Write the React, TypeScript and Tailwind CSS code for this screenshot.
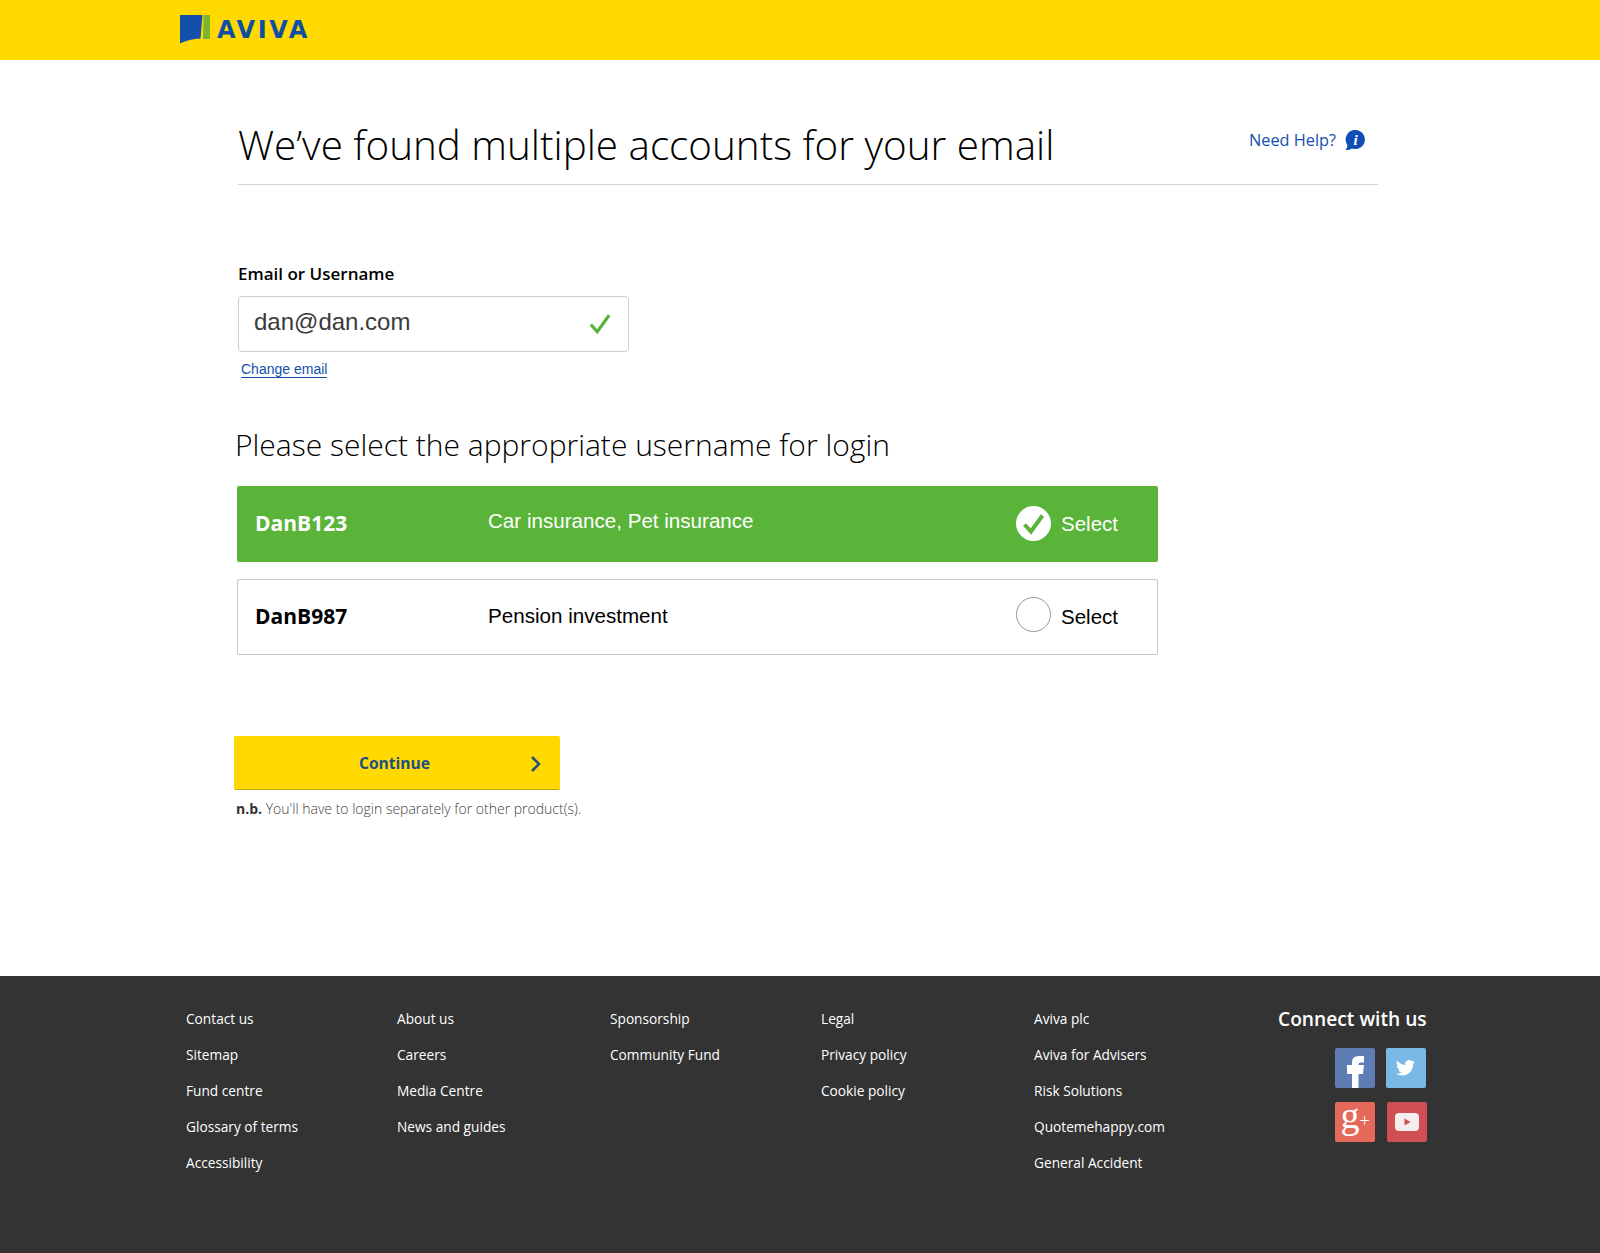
const SANS = 'font-["Open_Sans",sans-serif]';

const FOOTER_COLUMNS = [
  { width: 'w-[211px]', links: ['Contact us', 'Sitemap', 'Fund centre', 'Glossary of terms', 'Accessibility'] },
  { width: 'w-[213px]', links: ['About us', 'Careers', 'Media Centre', 'News and guides'] },
  { width: 'w-[211px]', links: ['Sponsorship', 'Community Fund'] },
  { width: 'w-[213px]', links: ['Legal', 'Privacy policy', 'Cookie policy'] },
  { width: 'w-[244px]', links: ['Aviva plc', 'Aviva for Advisers', 'Risk Solutions', 'Quotemehappy.com', 'General Accident'] },
];

function Logo() {
  return (
    <div className="flex items-center">
      <svg width="30" height="30" viewBox="0 0 30 30" className="mt-[-1px]">
        <path d="M0 0H22.5L20.5 23.5Q9 24 0 28.5Z" fill="#1250ac" />
        <path d="M23.5 0H30V24H23Z" fill="#7cb52e" />
      </svg>
      <span className="ml-[7px] font-['DejaVu_Sans',sans-serif] text-[24px] leading-none font-bold tracking-[2.6px] text-[#0f4fa3]">
        AVIVA
      </span>
    </div>
  );
}

function HelpIcon() {
  return (
    <svg width="22" height="22" viewBox="0 0 22 22">
      <path d="M11.5 1a9.5 9.5 0 1 1-3.4 18.4Q5 21.4 1.5 21Q3.3 19.200 3.4 16A9.500 9.500 0 0 1 11.500 1Z" fill="#0d4fb5" />
      <text x="11.500" y="16" textAnchor="middle" fontFamily="Liberation Serif, serif" fontWeight="700" fontStyle="italic" fontSize="15" fill="#fff">
        i
      </text>
    </svg>
  );
}

function AccountRow({ name, products, selected }: { name: string; products: string; selected: boolean }) {
  return (
    <div
      className={
        selected
          ? 'flex h-[76px] w-[921px] items-center rounded-[2px] bg-[#5ab43a] pl-[18px] text-white'
          : 'mt-[17px] flex h-[76px] w-[921px] items-center rounded-[2px] border border-[#c9c9c9] bg-white pl-[17px] text-black'
      }
    >
      <div className={`w-[233px] text-[21px] font-bold ${SANS}`}>{name}</div>
      <div className={`w-[528px] font-['Liberation_Sans',sans-serif] text-[20.6px] ${selected ? 'mb-[5px]' : 'mb-[2px]'}`}>{products}</div>
      {selected ? (
        <svg width="35" height="35" viewBox="0 0 35 35" className="mr-[10px] mb-[2px]">
          <circle cx="17.500" cy="17.500" r="17.500" fill="#fff" />
          <path d="M8.500 18.500L15 25.500L26.500 9.500" fill="none" stroke="#5ab43a" strokeWidth="4" />
        </svg>
      ) : (
        <div className="mr-[10px] mb-[6px] h-[35px] w-[35px] rounded-full border border-[#9a9a9a]" />
      )}
      <div className="font-['Liberation_Sans',sans-serif] text-[20.5px]">Select</div>
    </div>
  );
}

function SocialIcons() {
  return (
    <div className="mt-[11px] flex flex-col items-end gap-[14px]">
      <div className="mr-px flex gap-[11px]">
        <div className="h-10 w-10 overflow-hidden rounded-[2px] bg-[#5f7db5]">
          <svg width="40" height="40" viewBox="0 0 40 40">
            <path d="M17 40V26H12V17H17V14Q17 8 24 8H29V14.500H26Q23.500 14.500 23.500 16.500V17H29L28 26H23.500V40Z" fill="#fff" />
          </svg>
        </div>
        <div className="h-10 w-10 rounded-[2px] bg-[#7ab8e6]">
          <svg width="40" height="40" viewBox="0 0 24 24">
            <path
              transform="translate(6 6.200) scale(0.475)"
              d="M23.950 4.570a10 10 0 0 1-2.820.770 4.960 4.960 0 0 0 2.160-2.720 9.900 9.900 0 0 1-3.120 1.180 4.920 4.920 0 0 0-8.380 4.480A13.940 13.940 0 0 1 1.670 3.150a4.920 4.920 0 0 0 1.520 6.570 4.900 4.900 0 0 1-2.230-.620v.060a4.920 4.920 0 0 0 3.950 4.830 5 5 0 0 1-2.210.080 4.940 4.940 0 0 0 4.600 3.420A9.870 9.870 0 0 1 0 19.540a13.940 13.940 0 0 0 7.550 2.210c9.050 0 14-7.500 14-13.980 0-.210 0-.420-.020-.630a9.940 9.940 0 0 0 2.460-2.550z"
              fill="#fff"
            />
          </svg>
        </div>
      </div>
      <div className="flex gap-[12px]">
        <div className="flex h-10 w-10 items-start justify-center rounded-[2px] bg-[#e5695a] font-['Liberation_Serif',serif] text-white">
          <span className="text-[38px] leading-[26px]">g</span>
          <span className="mt-[10px] text-[18px] leading-none font-light">+</span>
        </div>
        <div className="flex h-10 w-10 items-center justify-center rounded-[2px] bg-[#cf4f54]">
          <svg width="26" height="20" viewBox="0 0 26 20">
            <rect x="1" y="1" width="24" height="18" rx="4" fill="#f4eeee" />
            <path d="M10.500 6.500L16.500 10L10.500 13.500Z" fill="#cf4f54" />
          </svg>
        </div>
      </div>
    </div>
  );
}

export default function App() {
  return (
    <div className="flex min-h-[1253px] flex-col bg-white">
      <header className="flex h-[60px] items-center bg-[#ffd900] pl-[180px]">
        <Logo />
      </header>

      <main className="flex-1 pl-[238px]">
        <div className="flex h-[125px] w-[1140px] items-end justify-between border-b border-[#d4d4d4] pb-[19px]">
          <h1 className={`text-[40.4px] leading-none font-light text-black ${SANS}`}>We’ve found multiple accounts for your email</h1>
          <div className="mr-[12px] mb-[13px] flex items-center gap-[8px]">
            <span className={`text-[16.3px] text-[#1250ac] ${SANS}`}>Need Help?</span>
            <HelpIcon />
          </div>
        </div>

        <label className={`mt-[78px] block text-[17px] leading-[22px] font-semibold text-black ${SANS}`}>Email or Username</label>
        <div className="mt-[11px] flex h-[56px] w-[391px] items-center justify-between rounded-[4px] border border-[#cfcfcf] pr-[17px] pl-[15px]">
          <span className="mb-[4px] font-['Liberation_Sans',sans-serif] text-[24px] text-[#3a3a3a]">dan@dan.com</span>
          <svg width="22" height="22" viewBox="0 0 24 24">
            <path d="M2 12.500L9 20.500L22 2.500" fill="none" stroke="#5ab43a" strokeWidth="3.500" />
          </svg>
        </div>
        <a className="mt-[9px] ml-[3px] block w-fit border-b border-[#1250ac] font-['Liberation_Sans',sans-serif] text-[14px] leading-[16px] text-[#1250ac]">
          Change email
        </a>

        <h2 className={`mt-[46px] ml-[-3px] text-[30px] leading-[42px] font-light text-black ${SANS}`}>Please select the appropriate username for login</h2>

        <div className="mt-[20px] ml-[-1px]">
          <AccountRow name="DanB123" products="Car insurance, Pet insurance" selected />
          <AccountRow name="DanB987" products="Pension investment" selected={false} />
        </div>

        <button className="relative mt-[81px] ml-[-4px] block h-[54px] w-[326px] rounded-[2px] border-b border-[#c9a800] bg-[#ffd900] pt-[1px]">
          <span className={`mr-[5px] text-[15.6px] font-bold text-[#1a4f8a] ${SANS}`}>Continue</span>
          <svg width="12" height="18" viewBox="0 0 12 18" className="absolute top-[19px] right-[18px]">
            <path d="M2 2L9 9L2 16" fill="none" stroke="#1f5080" strokeWidth="2.500" />
          </svg>
        </button>
        <p className={`mt-[9px] ml-[-2px] text-[14px] leading-[20px] font-light text-[#444] ${SANS}`}>
          <span className="font-bold text-[#333]">n.b.</span> You'll have to login separately for other product(s).
        </p>
      </main>

      <footer className="flex h-[277px] bg-[#333333] pt-[25px] pl-[186px] text-white">
        {FOOTER_COLUMNS.map(col => (
          <ul key={col.links[0]} className={`${col.width} text-[13.7px] leading-[36px] ${SANS}`}>
            {col.links.map(link => (
              <li key={link}>{link}</li>
            ))}
          </ul>
        ))}
        <div className="w-[149px]">
          <div className={`text-[19.2px] leading-[36px] font-semibold whitespace-nowrap ${SANS}`}>Connect with us</div>
          <SocialIcons />
        </div>
      </footer>
    </div>
  );
}
